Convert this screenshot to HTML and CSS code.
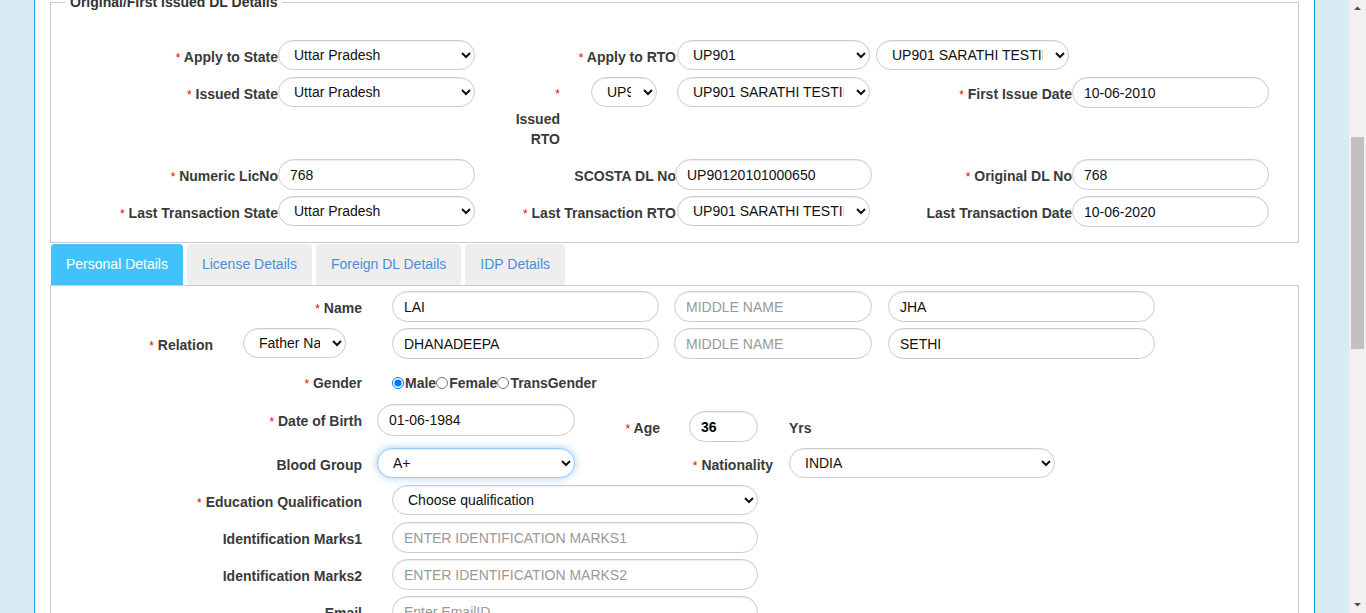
FILE: index.html
```html
<!DOCTYPE html>
<html lang="en">
<head>
<meta charset="utf-8">
<title>DL Details</title>
<link rel="stylesheet" href="styles.css">
</head>
<body>
<div class="viewport">
  <div class="container">
    <fieldset class="dl-fieldset">
      <legend>Original/First issued DL Details</legend>

      <div class="frow frow-1">
        <label class="flabel"><span class="req">*</span> Apply to State</label>
        <select class="ctl sel"><option>Uttar Pradesh</option></select>
        <label class="flabel"><span class="req">*</span> Apply to RTO</label>
        <select class="ctl sel sel-c2"><option>UP901</option></select>
        <select class="ctl sel sel-extra"><option>UP901 SARATHI TESTING</option></select>
        <div></div>
      </div>

      <div class="frow frow-2">
        <label class="flabel"><span class="req">*</span> Issued State</label>
        <select class="ctl sel"><option>Uttar Pradesh</option></select>
        <div class="split">
          <label class="flabel stacked"><span class="req">*</span><span class="stack-text">Issued RTO</span></label>
          <select class="ctl sel sel-tiny"><option>UP901</option></select>
        </div>
        <select class="ctl sel sel-c2"><option>UP901 SARATHI TESTING</option></select>
        <label class="flabel"><span class="req">*</span> First Issue Date</label>
        <input class="ctl inp" type="text" value="10-06-2010">
      </div>

      <div class="frow frow-3">
        <label class="flabel"><span class="req">*</span> Numeric LicNo</label>
        <input class="ctl inp" type="text" value="768">
        <label class="flabel">SCOSTA DL No</label>
        <input class="ctl inp inp-c2" type="text" value="UP90120101000650">
        <label class="flabel"><span class="req">*</span> Original DL No</label>
        <input class="ctl inp" type="text" value="768">
      </div>

      <div class="frow frow-4">
        <label class="flabel"><span class="req">*</span> Last Transaction State</label>
        <select class="ctl sel"><option>Uttar Pradesh</option></select>
        <label class="flabel"><span class="req">*</span> Last Transaction RTO</label>
        <select class="ctl sel sel-c2"><option>UP901 SARATHI TESTING</option></select>
        <label class="flabel">Last Transaction Date</label>
        <input class="ctl inp" type="text" value="10-06-2020">
      </div>
    </fieldset>

    <ul class="tabs">
      <li class="tab active">Personal Details</li>
      <li class="tab">License Details</li>
      <li class="tab">Foreign DL Details</li>
      <li class="tab">IDP Details</li>
    </ul>

    <div class="panel">
      <div class="prow r-name">
        <label class="plabel w-main"><span class="req">*</span> Name</label>
        <input class="ctl inp w-267 ml-30" type="text" value="LAI">
        <input class="ctl inp w-198 ml-15" type="text" placeholder="MIDDLE NAME">
        <input class="ctl inp w-267 ml-16" type="text" value="JHA">
      </div>

      <div class="prow r-rel">
        <label class="plabel w-rel"><span class="req">*</span> Relation</label>
        <select class="ctl sel w-103 ml-30"><option>Father Name</option></select>
        <input class="ctl inp w-267 ml-46" type="text" value="DHANADEEPA">
        <input class="ctl inp w-198 ml-15" type="text" placeholder="MIDDLE NAME">
        <input class="ctl inp w-267 ml-16" type="text" value="SETHI">
      </div>

      <div class="prow r-gender">
        <label class="plabel w-main plain"><span class="req">*</span> Gender</label>
        <div class="radios ml-30">
          <label class="radio"><input type="radio" name="g" checked>Male</label>
          <label class="radio"><input type="radio" name="g">Female</label>
          <label class="radio"><input type="radio" name="g">TransGender</label>
        </div>
      </div>

      <div class="prow r-dob">
        <label class="plabel w-main"><span class="req">*</span> Date of Birth</label>
        <input class="ctl inp w-198 ml-15 h-32" type="text" value="01-06-1984">
        <div class="age-group">
          <label class="plabel w-age"><span class="req">*</span> Age</label>
          <input class="ctl inp w-69 ml-29 bold" type="text" value="36">
          <span class="plabel yrs">Yrs</span>
        </div>
      </div>

      <div class="prow r-blood">
        <label class="plabel w-main">Blood Group</label>
        <select class="ctl sel w-198 ml-15 focused"><option>A+</option></select>
        <label class="plabel w-nat"><span class="req">*</span> Nationality</label>
        <select class="ctl sel w-266 ml-16"><option>INDIA</option></select>
      </div>

      <div class="prow r-edu">
        <label class="plabel w-main"><span class="req">*</span> Education Qualification</label>
        <select class="ctl sel w-366 ml-30"><option>Choose qualification</option></select>
      </div>

      <div class="prow r-id1">
        <label class="plabel w-main">Identification Marks1</label>
        <input class="ctl inp w-366 ml-30" type="text" placeholder="ENTER IDENTIFICATION MARKS1">
      </div>

      <div class="prow r-id2">
        <label class="plabel w-main">Identification Marks2</label>
        <input class="ctl inp w-366 ml-30" type="text" placeholder="ENTER IDENTIFICATION MARKS2">
      </div>

      <div class="prow r-email">
        <label class="plabel w-main">Email</label>
        <input class="ctl inp w-366 ml-30" type="text" placeholder="Enter EmailID">
      </div>
    </div>
  </div>
</div>
<div class="scrollbar">
  <div class="sb-btn"><svg width="17" height="17" viewBox="0 0 17 17"><path d="M5 10 L8.5 6.5 L12 10 Z" fill="#505050"/></svg></div>
  <div class="sb-track"><div class="sb-thumb"></div></div>
  <div class="sb-btn"><svg width="17" height="17" viewBox="0 0 17 17"><path d="M5 7 L8.5 10.5 L12 7 Z" fill="#505050"/></svg></div>
</div>
</body>
</html>
```
FILE: styles.css
```css
html, body {
  margin: 0;
  height: 613px;
  overflow: hidden;
}
body {
  display: flex;
  background: #d9ecf6;
  font-family: "Liberation Sans", Arial, sans-serif;
  font-size: 14px;
  color: #333;
}
.viewport {
  flex: 1;
  display: flex;
  padding: 0 34px;
  min-width: 0;
}
.container {
  flex: 1;
  background: #fff;
  border-left: 1px solid #1aa0df;
  border-right: 1px solid #1aa0df;
  padding: 0 15px;
  overflow: hidden;
}

/* ---------- controls ---------- */
.ctl {
  box-sizing: border-box;
  font-family: "Liberation Sans", Arial, sans-serif;
  font-size: 14px;
  color: #111;
  border: 1px solid #ccc;
  border-radius: 16px;
  background: #fff;
  box-shadow: inset 0 1px 1px rgba(0, 0, 0, 0.075);
  margin: 0;
  outline: none;
}
.inp {
  height: 31px;
  padding: 0 11px;
  width: 197px;
}
.sel {
  height: 30px;
  padding: 0 9px 0 11px;
  width: 197px;
}
.inp::placeholder { color: #999; }

/* ---------- fieldset ---------- */
.dl-fieldset {
  margin: -8px 0 1px;
  border: 1px solid #ccc;
  padding: 28px 0 15px 0;
  min-width: 0;
}
.dl-fieldset legend {
  font-weight: bold;
  font-size: 14px;
  line-height: 20px;
  color: #333;
  margin-left: 14px;
  padding: 0 5px;
}
.frow {
  display: grid;
  grid-template-columns: 200px 198px 200px 198px 198px 198px;
  align-items: start;
  margin-left: 27px;
}
.frow-1 { margin-bottom: 7px; }
.frow-2 { margin-bottom: 10px; }
.frow-3 { margin-bottom: 6px; }

.flabel {
  font-weight: bold;
  text-align: right;
  line-height: 20px;
  padding-top: 7px;
  white-space: nowrap;
  color: #3a3a3a;
}
.req {
  color: #e00;
  font-weight: normal;
  font-size: 12px;
}
.frow .sel-c2 { width: 193px; margin-left: 1px; }
.frow .inp-c2 { margin-left: -1px; }
.frow .sel-extra { width: 193px; margin-left: 2px; }
.split {
  display: flex;
  align-items: flex-start;
}
.stacked {
  flex: 1;
  display: flex;
  flex-direction: column;
  align-items: flex-end;
}
.stack-text {
  width: 50px;
  white-space: normal;
  text-align: right;
  margin-top: 5px;
}
.split .sel-tiny {
  flex: none;
  width: 66px;
  margin-left: 31px;
  margin-right: 19px;
}

/* ---------- tabs ---------- */
.tabs {
  list-style: none;
  margin: 0;
  padding: 0 0 0 1px;
  display: flex;
  gap: 4px;
}
.tab {
  height: 41px;
  line-height: 41px;
  padding: 0 15px;
  background: #eee;
  color: #4a8fd6;
  border-radius: 4px 4px 0 0;
}
.tab.active {
  background: #42c2fc;
  color: #fff;
}

/* ---------- panel ---------- */
.panel {
  border: 1px solid #ccc;
  border-bottom: none;
  padding-top: 5px;
  height: 400px;
}
.prow {
  display: flex;
  align-items: flex-start;
}
.plabel {
  font-weight: bold;
  text-align: right;
  line-height: 20px;
  padding-top: 7px;
  white-space: nowrap;
  color: #3a3a3a;
  box-sizing: border-box;
  flex: none;
}
.plain { padding-top: 2px; }
.w-main { width: 311px; }
.w-rel { width: 162px; }
.w-nat { width: 198px; }
.w-age { width: 48px; }

.w-267 { width: 267px; }
.w-198 { width: 198px; }
.w-103 { width: 103px; }
.w-69 { width: 69px; }
.w-266 { width: 266px; }
.w-366 { width: 366px; }
.ml-15 { margin-left: 15px; }
.ml-16 { margin-left: 16px; }
.ml-29 { margin-left: 29px; }
.ml-30 { margin-left: 30px; }
.ml-46 { margin-left: 46px; }
.h-32 { height: 32px; }
.bold { font-weight: bold; color: #000; }

.r-name { margin-bottom: 6px; }
.r-rel { margin-bottom: 12px; }
.r-gender { margin-bottom: 9px; height: 24px; }
.r-dob { margin-bottom: 6px; }
.r-blood { margin-bottom: 7px; }
.r-edu { margin-bottom: 7px; }
.r-id1 { margin-bottom: 6px; }
.r-id2 { margin-bottom: 6px; }

.radios {
  display: flex;
  align-items: center;
  height: 24px;
}
.radio {
  display: flex;
  align-items: center;
  font-weight: bold;
  color: #3a3a3a;
}
.radio input {
  margin: 0 1px 0 0;
  width: 12px;
  height: 12px;
}
.age-group {
  display: flex;
  align-items: flex-start;
  margin-top: 7px;
}
.age-group .w-age { margin-left: 37px; }
.yrs {
  margin-left: 31px;
  text-align: left;
}
.focused {
  border-color: #9cc9ef;
  box-shadow: inset 0 1px 1px rgba(0,0,0,.075), 0 0 8px rgba(102, 175, 233, 0.6);
}

/* ---------- scrollbar ---------- */
.scrollbar {
  width: 17px;
  background: #f1f1f1;
  display: flex;
  flex-direction: column;
}
.sb-btn {
  height: 17px;
  display: flex;
}
.sb-track {
  flex: 1;
  padding-top: 120px;
}
.sb-thumb {
  margin: 0 2px;
  height: 212px;
  background: #c1c1c1;
}
```
